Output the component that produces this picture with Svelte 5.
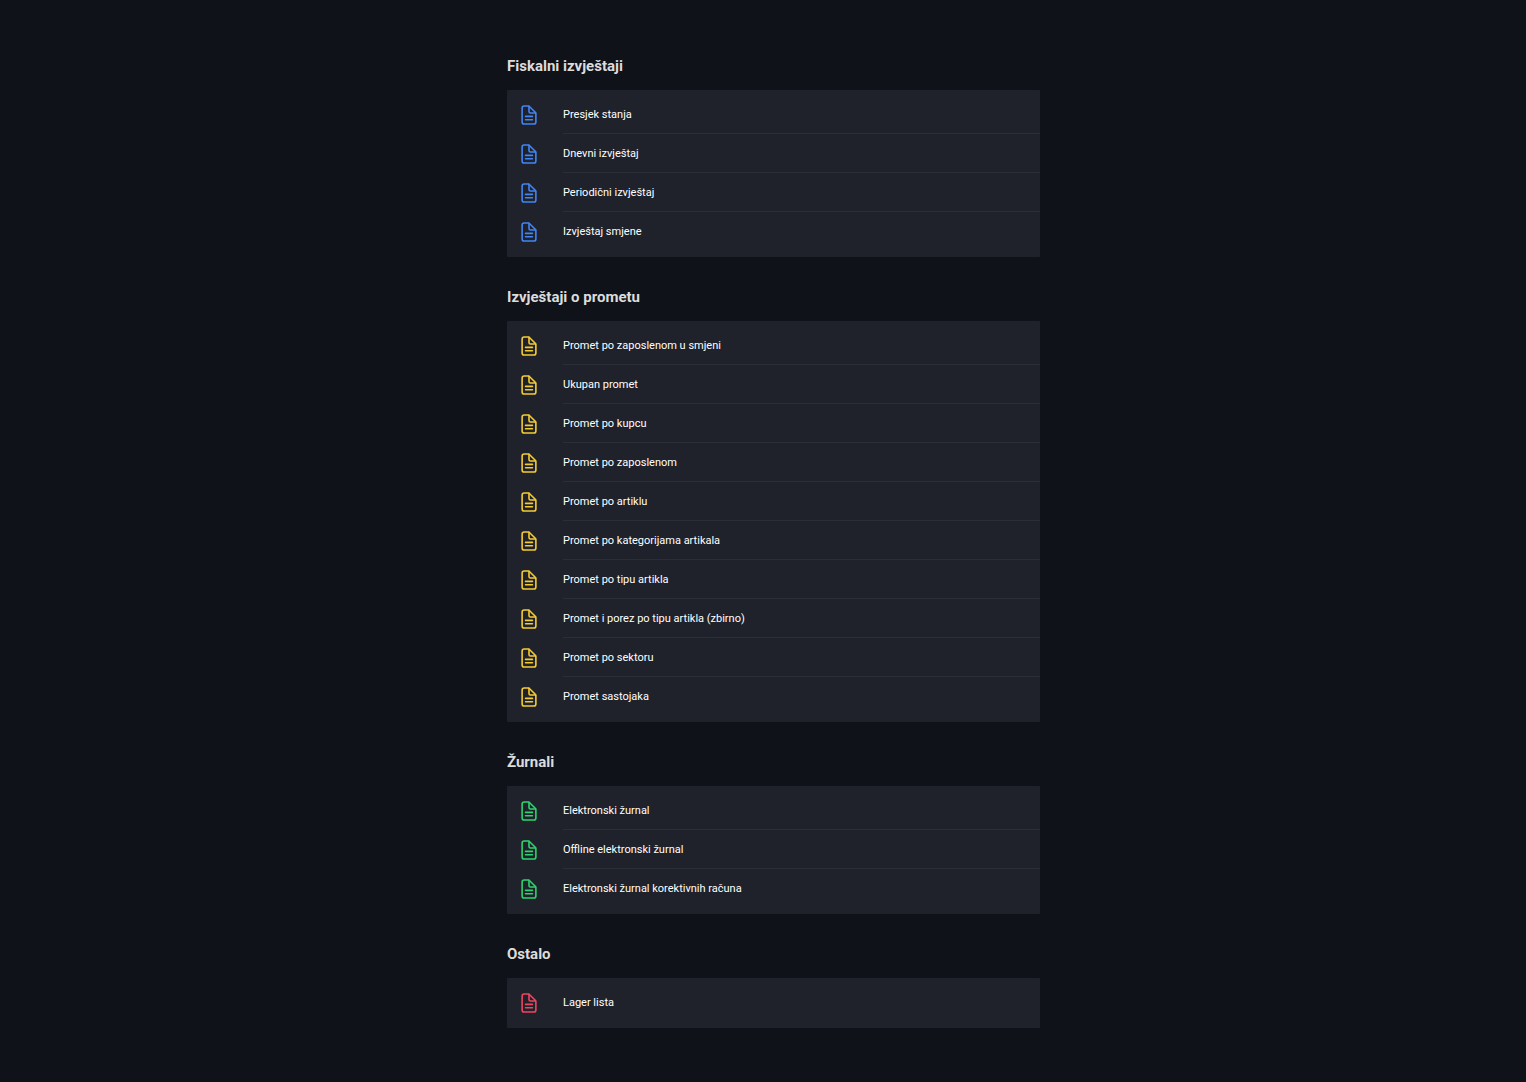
<script>
  const groups = [
    {
      title: 'Fiskalni izvještaji',
      tone: 'blue',
      items: ['Presjek stanja', 'Dnevni izvještaj', 'Periodični izvještaj', 'Izvještaj smjene']
    },
    {
      title: 'Izvještaji o prometu',
      tone: 'yellow',
      items: [
        'Promet po zaposlenom u smjeni',
        'Ukupan promet',
        'Promet po kupcu',
        'Promet po zaposlenom',
        'Promet po artiklu',
        'Promet po kategorijama artikala',
        'Promet po tipu artikla',
        'Promet i porez po tipu artikla (zbirno)',
        'Promet po sektoru',
        'Promet sastojaka'
      ]
    },
    {
      title: 'Žurnali',
      tone: 'green',
      items: ['Elektronski žurnal', 'Offline elektronski žurnal', 'Elektronski žurnal korektivnih računa']
    },
    { title: 'Ostalo', tone: 'red', items: ['Lager lista'] }
  ];
</script>

<main>
  <div class="column">
    {#each groups as group}
      <section>
        <h2>{group.title}</h2>
        <ul>
          {#each group.items as item}
            <li>
              <a href="#report">
                <svg class={group.tone} viewBox="0 0 512 512" aria-hidden="true">
                  <path d="M416 221.25V416a48 48 0 01-48 48H144a48 48 0 01-48-48V96a48 48 0 0148-48h98.75a32 32 0 0122.62 9.37l141.26 141.26a32 32 0 019.37 22.62z" />
                  <path d="M256 56v120a32 32 0 0032 32h120M176 288h160M176 368h160" />
                </svg>
                <span>{item}</span>
              </a>
            </li>
          {/each}
        </ul>
      </section>
    {/each}
  </div>
</main>

<style>
  :global(body) {
    background: #0f1219;
  }

  main {
    box-sizing: border-box;
    min-height: 100vh;
    padding: 26px 0 32px 21px;
    background: #0f1219;
    font-family: Roboto, 'Liberation Sans', sans-serif;
  }

  .column {
    max-width: 533px;
    margin: 0 auto;
  }

  h2 {
    margin: 0;
    padding: 30px 0 14px;
    font-size: 15px;
    line-height: 20px;
    font-weight: 700;
    color: #dcdcdd;
  }

  ul {
    margin: 0;
    padding: 5px 0 6px;
    list-style: none;
    background: #1f222a;
    border-radius: 1px;
  }

  a {
    display: flex;
    align-items: stretch;
    height: 39px;
    padding-left: 11px;
    color: #fff;
    text-decoration: none;
  }

  svg {
    flex: none;
    width: 22px;
    height: 22px;
    margin: 9px 23px 0 0;
    fill: none;
    stroke: currentColor;
    stroke-width: 37;
    stroke-linecap: round;
    stroke-linejoin: round;
  }

  span {
    flex: 1;
    padding-top: 2px;
    font-size: 11px;
    line-height: 36px;
    border-bottom: 1px solid #2b2e35;
  }

  li:last-child span {
    border-bottom-color: transparent;
  }

  .blue {
    color: #4285f4;
  }

  .yellow {
    color: #f5cb34;
  }

  .green {
    color: #2dd36f;
  }

  .red {
    color: #f04560;
  }
</style>
